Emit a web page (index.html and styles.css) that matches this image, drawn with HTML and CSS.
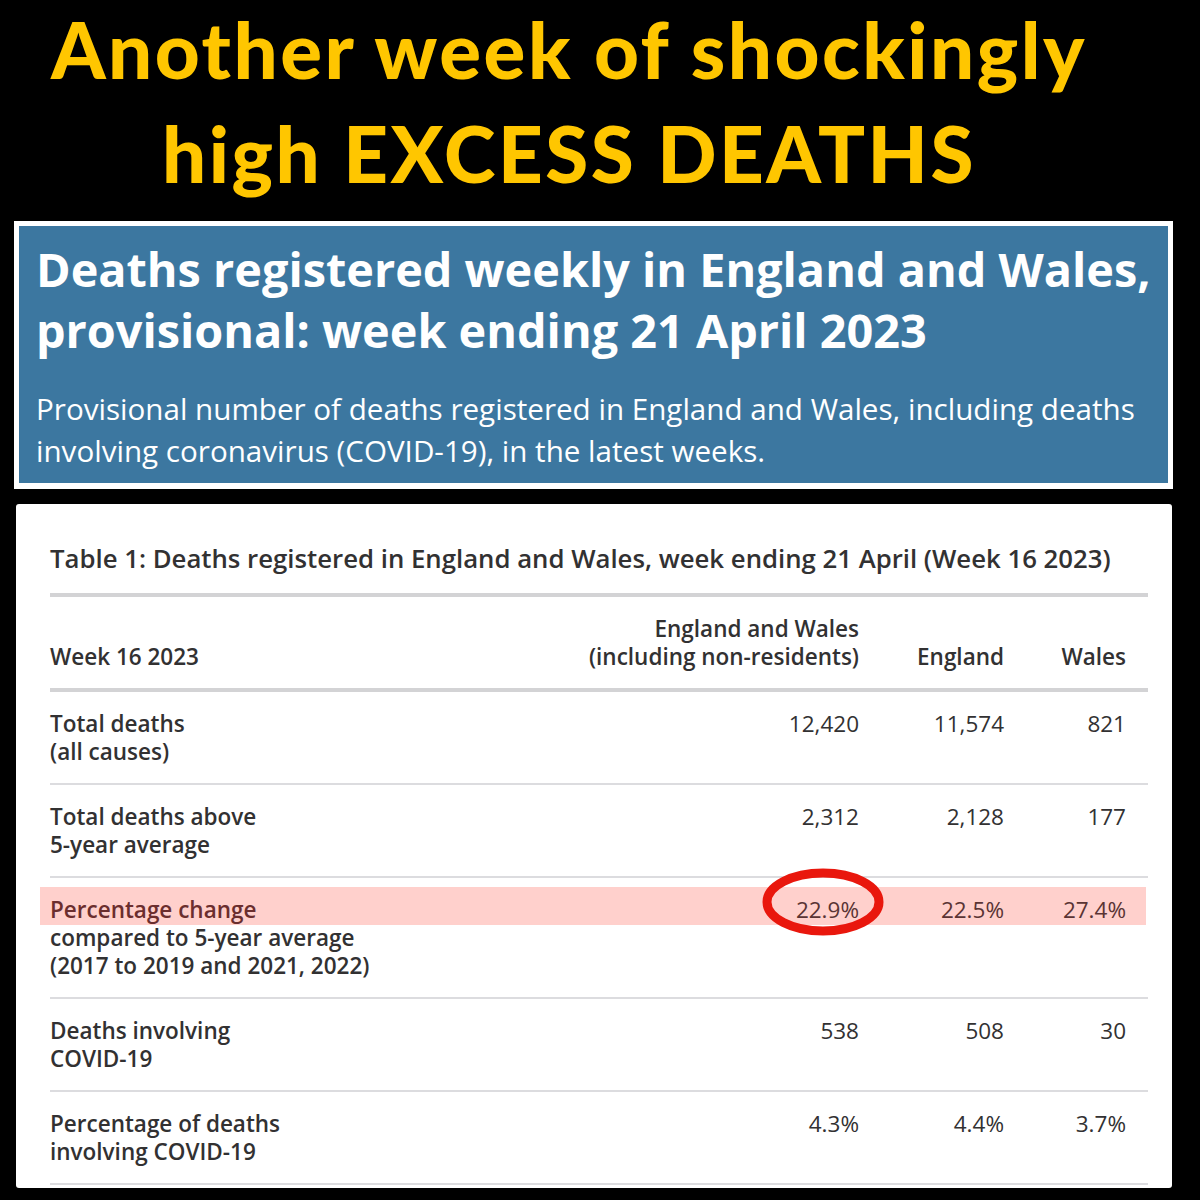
FILE: index.html
```html
<!DOCTYPE html>
<html lang="en">
<head>
<meta charset="utf-8">
<title>Another week of shockingly high EXCESS DEATHS</title>
<link rel="stylesheet" href="styles.css">
</head>
<body>
<div class="page">
  <h1 class="headline">
    <span class="hl-line">Another week of shockingly</span>
    <span class="hl-line">high EXCESS DEATHS</span>
  </h1>

  <section class="hero">
    <h2 class="hero-title">Deaths registered weekly in England and Wales, provisional: week ending 21 April 2023</h2>
    <p class="hero-sub">Provisional number of deaths registered in England and Wales, including deaths involving coronavirus (COVID-19), in the latest weeks.</p>
  </section>

  <section class="card">
    <h3 class="card-title">Table 1: Deaths registered in England and Wales, week ending 21 April (Week 16 2023)</h3>
    <table class="data">
      <thead>
        <tr>
          <th class="c-label">Week 16 2023</th>
          <th class="c-ew">England and Wales<br>(including non-residents)</th>
          <th class="c-en">England</th>
          <th class="c-wa">Wales</th>
        </tr>
      </thead>
      <tbody>
        <tr>
          <td class="c-label">Total deaths<br>(all causes)</td>
          <td class="c-ew">12,420</td>
          <td class="c-en">11,574</td>
          <td class="c-wa">821</td>
        </tr>
        <tr>
          <td class="c-label">Total deaths above<br>5-year average</td>
          <td class="c-ew">2,312</td>
          <td class="c-en">2,128</td>
          <td class="c-wa">177</td>
        </tr>
        <tr class="highlight">
          <td class="c-label"><span class="hl-first">Percentage change</span><br>compared to 5-year average<br>(2017 to 2019 and 2021, 2022)</td>
          <td class="c-ew">22.9%</td>
          <td class="c-en">22.5%</td>
          <td class="c-wa">27.4%</td>
        </tr>
        <tr>
          <td class="c-label">Deaths involving<br>COVID-19</td>
          <td class="c-ew">538</td>
          <td class="c-en">508</td>
          <td class="c-wa">30</td>
        </tr>
        <tr>
          <td class="c-label">Percentage of deaths<br>involving COVID-19</td>
          <td class="c-ew">4.3%</td>
          <td class="c-en">4.4%</td>
          <td class="c-wa">3.7%</td>
        </tr>
      </tbody>
    </table>
    <svg class="circle-mark" width="124" height="70" viewBox="0 0 124 70" aria-hidden="true">
      <ellipse cx="61" cy="34" rx="56" ry="29" fill="none" stroke="#e9170d" stroke-width="9"/>
    </svg>
  </section>
</div>
</body>
</html>
```

FILE: styles.css
```css
* { box-sizing: border-box; }

html, body {
  margin: 0;
  padding: 0;
  background: #000;
}

.page {
  width: 1200px;
  height: 1200px;
  background: #000;
  overflow: hidden;
  padding-top: 1px;
}

.headline {
  margin: -4px 0 0;
  padding: 0 62px 0 0;
  text-align: center;
  font-family: Lato, "Open Sans", sans-serif;
  font-weight: 900;
  font-size: 78px;
  line-height: 104px;
  color: #ffc600;
  letter-spacing: 2.5px;
}

.hl-line { display: block; }

.hero {
  margin: 16px 27px 0 14px;
  border: 5px solid #fff;
  border-bottom-width: 6px;
  background: #3c77a0;
  color: #fff;
  font-family: "Open Sans", sans-serif;
  padding: 13px 10px 17px 17px;
  height: 268px;
}

.hero-title {
  margin: 0;
  font-size: 46.8px;
  font-weight: 700;
  line-height: 61px;
  letter-spacing: 0;
}

.hero-sub {
  margin: 27px 0 0;
  font-size: 29.6px;
  font-weight: 400;
  line-height: 42px;
}

.card {
  position: relative;
  z-index: 0;
  margin: 15px 28px 0 16px;
  background: #fff;
  border-radius: 3px;
  padding: 38px 24px 3px 34px;
  font-family: "Open Sans", sans-serif;
  color: #323132;
}

.card-title {
  margin: 0 0 19px;
  font-size: 25.75px;
  font-weight: 600;
  line-height: 32px;
  white-space: nowrap;
}

.data {
  width: 100%;
  border-collapse: collapse;
  border-top: 4px solid #d3d3d5;
  font-size: 22.5px;
  line-height: 28px;
}

.data th,
.data td {
  padding: 18px 0 17px;
  vertical-align: top;
  text-align: right;
}

.data th {
  font-weight: 600;
  vertical-align: bottom;
  border-bottom: 4px solid #d3d3d5;
}

.data td {
  font-weight: 400;
  border-bottom: 2px solid #dcdcdf;
}

.data .c-label {
  text-align: left;
  font-weight: 600;
  width: auto;
}

.data .c-ew { width: 320px; }
.data .c-en { width: 145px; }
.data .c-wa { width: 144px; padding-right: 22px; }

.highlight td { color: #5a3434; }
.highlight .c-label { color: #323132; position: relative; }
.highlight .hl-first { color: #6b2e2e; }

.highlight .c-label::before {
  content: "";
  position: absolute;
  left: -10px;
  top: 9px;
  width: 1106px;
  height: 38px;
  background: #ffd0cc;
  z-index: -1;
}

.circle-mark {
  position: absolute;
  left: 746px;
  top: 364px;
}
```
